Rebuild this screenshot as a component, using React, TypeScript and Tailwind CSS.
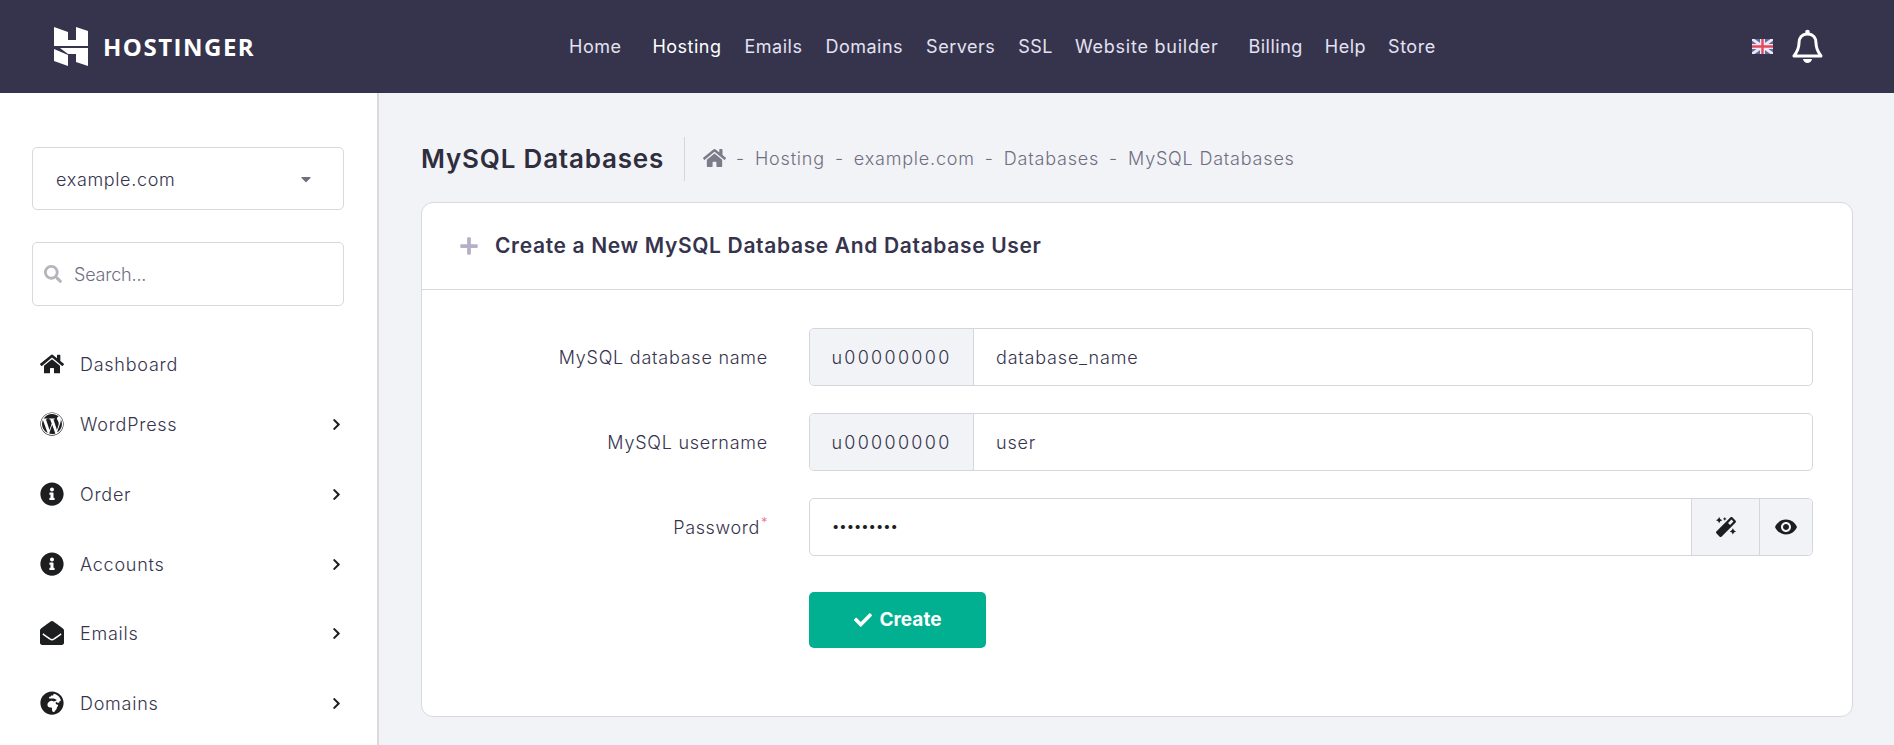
import { FaHome, FaWordpress, FaInfoCircle, FaEnvelopeOpen, FaGlobeAfrica, FaChevronRight, FaCheck, FaMagic, FaSearch, FaPlus, FaCaretDown } from "react-icons/fa";
import { MdRemoveRedEye } from "react-icons/md";

const TOP_NAV = [
  { label: "Home", cls: "ml-0" },
  { label: "Hosting", cls: "ml-[31px] text-white" },
  { label: "Emails", cls: "ml-[23px]" },
  { label: "Domains", cls: "ml-[23px]" },
  { label: "Servers", cls: "ml-[23px]" },
  { label: "SSL", cls: "ml-[23px]" },
  { label: "Website builder", cls: "ml-[22px] tracking-[0.75px]" },
  { label: "Billing", cls: "ml-[30px]" },
  { label: "Help", cls: "ml-[22px]" },
  { label: "Store", cls: "ml-[22px]" },
];

const SIDE_NAV = [
  { label: "Dashboard", icon: FaHome, cls: "h-[30px] mt-[43px]", arrow: false },
  { label: "WordPress", icon: FaWordpress, cls: "h-[30px] mt-[30px]", arrow: true },
  { label: "Order", icon: FaInfoCircle, cls: "h-[30px] mt-[40px]", arrow: true },
  { label: "Accounts", icon: FaInfoCircle, cls: "h-[30px] mt-[40px]", arrow: true },
  { label: "Emails", icon: FaEnvelopeOpen, cls: "h-[30px] mt-[39px]", arrow: true },
  { label: "Domains", icon: FaGlobeAfrica, cls: "h-[30px] mt-[40px]", arrow: true },
];

const BREADCRUMB = ["Hosting", "example.com", "Databases", "MySQL Databases"];

function Logo() {
  return (
    <svg viewBox="0 0 34 39" className="h-[39px] w-[34px]" fill="#fff">
      <path d="M0 0 L14 5 V13 H22 V0 L34 4 V19 H0 Z" />
      <path d="M6 21 H34 V39 L22 35 V27 H14 Z" />
      <path d="M0 22 L14 28 V39 L0 34 Z" />
    </svg>
  );
}

function Flag() {
  return (
    <svg viewBox="0 0 21 15" className="h-[15px] w-[21px]">
      <rect width="21" height="15" fill="#5a6aa8" />
      <path d="M0 0 L21 15 M21 0 L0 15" stroke="#f3e6ec" strokeWidth="3" />
      <path d="M10.5 0 V15 M0 7.5 H21" stroke="#f3e6ec" strokeWidth="5" />
      <path d="M10.5 0 V15 M0 7.5 H21" stroke="#e2495f" strokeWidth="2.4" />
    </svg>
  );
}

function NotifyBell() {
  return (
    <svg viewBox="0 0 31 34" className="mb-[2px] h-[34px] w-[31px]" fill="none" stroke="#fff" strokeWidth="3" strokeLinejoin="round">
      <circle cx="15.5" cy="3" r="1.6" fill="#fff" strokeWidth="1.4" />
      <path d="M15.5 5 C9.5 5 7 9.5 7 14 C7 20 5 23 2 27 H29 C26 23 24 20 24 14 C24 9.5 21.5 5 15.5 5 Z" />
      <path d="M11 30 H20 C19.6 32.6 17.6 34 15.5 34 C13.4 34 11.4 32.6 11 30 Z" fill="#fff" stroke="none" />
    </svg>
  );
}

function PrefixedRow({ label, value }: { label: string; value: string }) {
  return (
    <div className="flex h-[58px] items-center">
      <label className="w-[346px] pr-[41px] text-right text-[18px] font-light tracking-[0.75px] text-[#36344d]">{label}</label>
      <div className="flex h-full w-[1004px] rounded-[5px] border border-[#d5d5dc] bg-white">
        <span className="flex w-[164px] items-center justify-center rounded-l-[5px] border-r border-[#d5d5dc] bg-[#f2f3f6] text-[18px] font-light tracking-[2.3px] text-[#36344d]">u00000000</span>
        <span className="flex items-center pl-[22px] text-[18px] font-light tracking-[0.8px] text-[#36344d]">{value}</span>
      </div>
    </div>
  );
}

export default function App() {
  return (
    <div className="flex h-[745px] flex-col overflow-hidden bg-[#f2f3f6] font-['Inter',sans-serif]">
      <header className="flex h-[93px] shrink-0 items-center bg-[#36344d]">
        <div className="ml-[54px] flex w-[515px] items-center gap-[15px]">
          <Logo />
          <span className="font-['Open_Sans',sans-serif] text-[24px] font-bold tracking-[1.5px] text-white">HOSTINGER</span>
        </div>
        <nav className="flex pb-px text-[18px] tracking-[0.5px] text-[#e4e2f2]">
          {TOP_NAV.map((item) => (
            <a key={item.label} className={item.cls}>{item.label}</a>
          ))}
        </nav>
        <div className="ml-auto mr-[71px] flex items-center gap-[19px]">
          <Flag />
          <NotifyBell />
        </div>
      </header>

      <div className="flex min-h-0 flex-1">
        <aside className="w-[379px] shrink-0 border-r-2 border-[#dadade] bg-white pl-[32px] pr-[33px] pt-[54px]">
          <div className="flex h-[63px] items-center justify-between rounded-[5px] border border-[#d8d8dd] pl-[23px] pr-[29px] text-[18px] font-light tracking-[0.65px] text-[#36344d]">
            <span className="pt-px">example.com</span>
            <FaCaretDown className="h-[16px] w-[16px] text-[#6f6e82]" />
          </div>
          <div className="mt-[32px] flex h-[64px] items-center gap-[12px] rounded-[5px] border border-[#d8d8dd] pl-[11px] text-[18px] font-light tracking-[-0.2px] text-[#6f6e82]">
            <FaSearch className="h-[18px] w-[18px] text-[#b5b5bd]" />
            Search...
          </div>
          {SIDE_NAV.map((item) => (
            <div key={item.label + item.cls} className={`flex items-center ${item.cls}`}>
              <span className="flex w-[48px] pl-[8px]">
                <item.icon className="h-[24px] w-[24px] text-[#1d1e20]" />
              </span>
              <span className="text-[18px] font-light tracking-[0.75px] text-[#36344d]">{item.label}</span>
              {item.arrow && <FaChevronRight className="ml-auto mr-px h-[13px] w-[13px] text-[#1d1e20]" />}
            </div>
          ))}
        </aside>

        <main className="flex-1 pl-[42px] pr-[41px] pt-[44px]">
          <div className="flex h-[44px] items-center">
            <h1 className="mb-[2px] text-[26px] font-semibold tracking-[0.8px] text-[#2f2e3e]">MySQL Databases</h1>
            <span className="ml-[20px] h-[44px] w-px bg-[#d5d5dc]" />
            <FaHome className="mb-[2px] ml-[18px] h-[22px] w-[23px] text-[#7b7b8a]" />
            {BREADCRUMB.map((item) => (
              <span key={item} className="mb-[2px] flex items-center text-[18px] font-light tracking-[0.8px] text-[#6f6e82]">
                <span className="mx-[10px]">-</span>
                {item}
              </span>
            ))}
          </div>

          <section className="mt-[21px] h-[515px] rounded-[12px] border border-[#d8d8dd] bg-white">
            <div className="flex h-[87px] items-center border-b border-[#d8d8dd] pl-[37px]">
              <FaPlus className="h-[20px] w-[20px] text-[#b6afc8]" />
              <h2 className="ml-[16px] text-[21px] font-semibold tracking-[0.65px] text-[#36344d]">Create a New MySQL Database And Database User</h2>
            </div>
            <div className="flex flex-col gap-[27px] pl-[41px] pt-[38px]">
              <PrefixedRow label="MySQL database name" value="database_name" />
              <PrefixedRow label="MySQL username" value="user" />
              <div className="flex h-[58px] items-center">
                <label className="w-[346px] pr-[41px] text-right text-[18px] font-light tracking-[0.6px] text-[#36344d]">
                  Password<sup className="ml-[1px] text-[13px] text-[#e8698a]">*</sup>
                </label>
                <div className="flex h-full w-[1004px] rounded-[5px] border border-[#d5d5dc] bg-white">
                  <span className="flex flex-1 items-center pl-[22px] text-[13px] text-[#1d1e20]">•••••••••</span>
                  <span className="flex w-[68px] items-center justify-center border-l border-[#d5d5dc] bg-[#f2f3f6]">
                    <FaMagic className="h-[20px] w-[20px] text-[#1d1e20]" />
                  </span>
                  <span className="flex w-[53px] items-center justify-center rounded-r-[5px] border-l border-[#d5d5dc] bg-[#f2f3f6]">
                    <MdRemoveRedEye className="h-[24px] w-[24px] text-[#1d1e20]" />
                  </span>
                </div>
              </div>
              <div className="pl-[346px] pt-[9px]">
                <button className="flex h-[56px] w-[177px] items-center justify-center gap-[8px] rounded-[5px] bg-[#00b090] text-[19px] font-bold text-white">
                  <FaCheck className="h-[18px] w-[18px]" />
                  Create
                </button>
              </div>
            </div>
          </section>
        </main>
      </div>
    </div>
  );
}
